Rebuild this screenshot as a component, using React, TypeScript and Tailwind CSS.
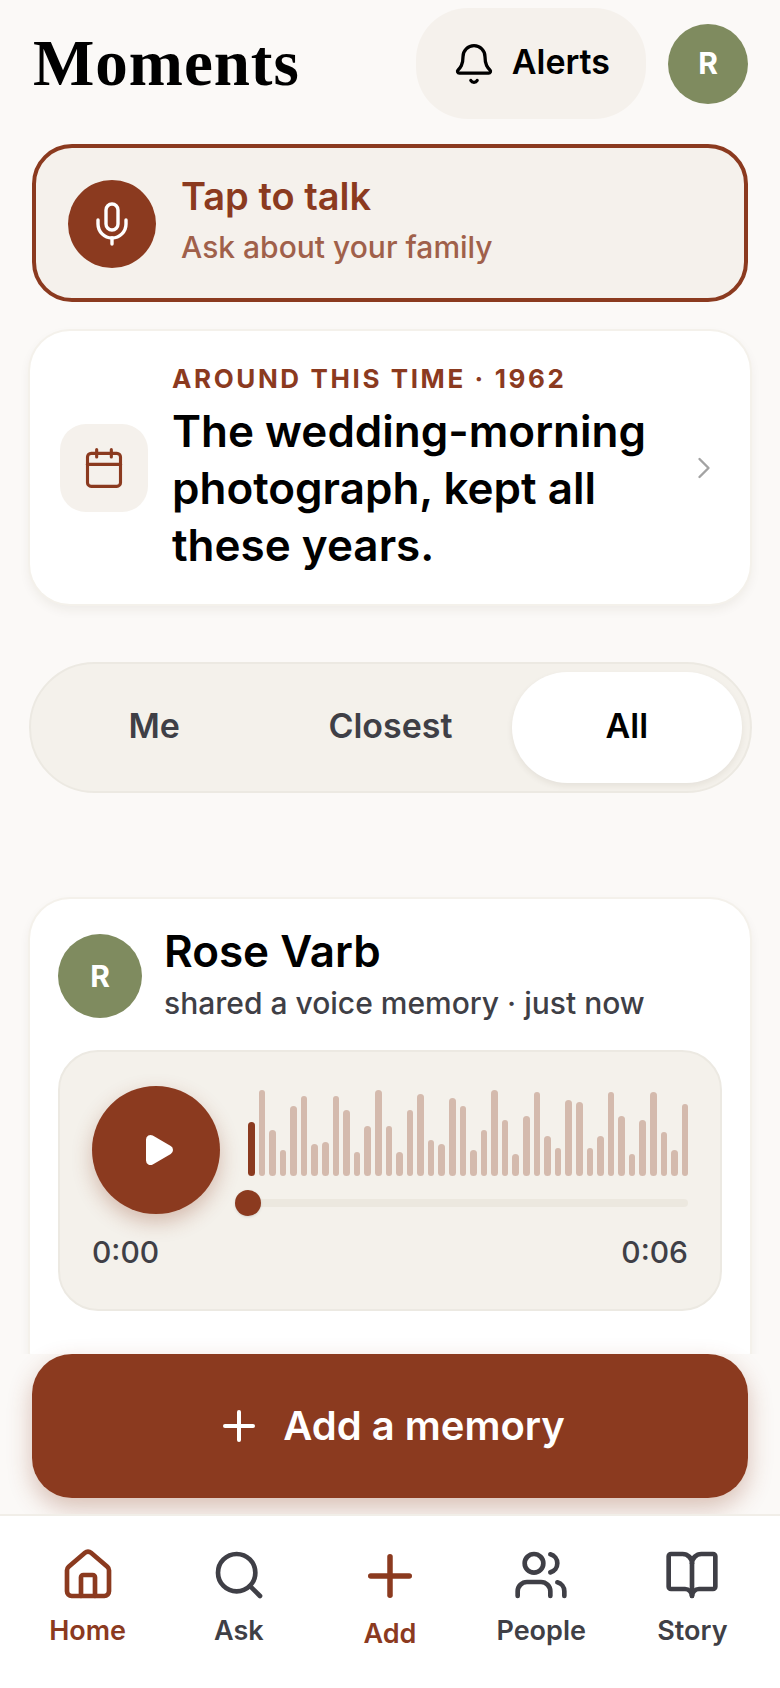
import { Bell, BookOpen, Calendar, ChevronRight, House, Mic, Play, Plus, Search, Users } from "lucide-react"

const bars = [
  54, 86, 46, 26, 70, 80, 32, 34, 80, 66, 24, 50, 86, 50, 24, 66, 82, 36, 32, 78, 70,
  26, 46, 86, 56, 22, 60, 84, 40, 28, 76, 74, 28, 40, 84, 60, 22, 56, 84, 44, 26, 72,
]

const navItems = [
  { label: "Home", icon: House, active: true },
  { label: "Ask", icon: Search, active: false },
  { label: "Add", icon: Plus, active: true, large: true },
  { label: "People", icon: Users, active: false },
  { label: "Story", icon: BookOpen, active: false },
]

export default function App() {
  return (
    <div className="flex h-[1688px] w-[780px] flex-col overflow-hidden bg-[#fbf9f7] font-['Inter',sans-serif] text-black">
      <main className="min-h-0 flex-1 overflow-hidden px-[30px]">
        {/* Header */}
        <header className="flex items-center pt-2 pr-[2px] pl-[3px]">
          <h1 className="flex-1 font-['Liberation_Serif',serif] text-[65px] leading-none font-bold tracking-[0.015em]">
            Moments
          </h1>
          <button className="flex h-[111px] items-center gap-4 rounded-[52px] bg-[#f5f1ec] px-9 text-[34px] font-semibold">
            <Bell size={44} strokeWidth={1.8} />
            <span className="pb-1">Alerts</span>
          </button>
          <div className="ml-[22px] flex h-20 w-20 items-center justify-center rounded-full bg-[#7f8b5f] text-[30px] font-bold text-white">
            R
          </div>
        </header>

        {/* Talk */}
        <button className="mx-[2px] mt-[25px] flex h-[158px] w-[716px] items-center gap-[25px] rounded-[40px] border-4 border-[#8b3a1f] bg-[#f5f1ec] pt-[2px] pl-8 text-left">
          <span className="flex h-[88px] w-[88px] items-center justify-center rounded-full bg-[#8b3a1f] text-white">
            <Mic size={48} strokeWidth={1.7} />
          </span>
          <span className="flex flex-col pb-2">
            <span className="text-[38px] leading-[50px] font-semibold text-[#8b3a1f]">Tap to talk</span>
            <span className="mt-1 text-[30px] leading-[44px] font-medium text-[#a0604a]">Ask about your family</span>
          </span>
        </button>

        {/* Around this time */}
        <section className="mt-[29px] flex h-[273px] items-center rounded-[40px] bg-white pr-[28px] pl-[30px] shadow-[0_0_0_2px_#f4f1eb,0_5px_12px_rgba(70,50,30,0.08)]">
          <div className="flex h-[88px] w-[88px] shrink-0 items-center justify-center rounded-[26px] bg-[#f5f1ec] text-[#8b3a1f]">
            <Calendar size={44} strokeWidth={1.7} />
          </div>
          <div className="ml-6 flex-1">
            <p className="text-[26px] leading-[36px] font-bold tracking-[0.1em] text-[#8b3a1f]">
              AROUND THIS TIME · 1962
            </p>
            <p className="mt-[6px] text-[44px] leading-[57px] font-semibold">
              The wedding-morning
              <br />
              photograph, kept all
              <br />
              these years.
            </p>
          </div>
          <ChevronRight size={36} strokeWidth={1.6} className="text-[#a3a3a3]" />
        </section>

        {/* Filter */}
        <div className="mt-[58px] -ml-[1px] -mr-[2px] grid h-[131px] grid-cols-3 gap-1.5 rounded-full border-2 border-[#ece9e2] bg-[#f4f1eb] p-2 text-[34px] font-semibold text-[#3f3f46]">
          <button className="pb-1">Me</button>
          <button className="pb-1">Closest</button>
          <button className="rounded-full bg-white pb-1 text-black shadow-[0_3px_6px_rgba(70,50,30,0.08)]">All</button>
        </div>

        {/* Memory */}
        <article className="mt-[106px] rounded-[40px] bg-white px-[28px] pt-6 pb-20 shadow-[0_0_0_2px_#f4f1eb,0_5px_12px_rgba(70,50,30,0.08)]">
          <div className="flex items-center gap-[22px]">
            <div className="flex h-[84px] w-[84px] items-center justify-center rounded-full bg-[#7f8b5f] text-[30px] font-bold text-white">
              R
            </div>
            <div className="pb-1">
              <p className="text-[44px] leading-[56px] font-semibold">Rose Varb</p>
              <p className="mt-[2px] text-[30px] leading-[44px] font-medium text-[#3f3f46]">
                shared a voice memory · just now
              </p>
            </div>
          </div>

          <div className="mt-[21px] rounded-[40px] border-2 border-[#ece9e2] bg-[#f4f1eb] px-8 pt-[34px] pb-[37px]">
            <div className="flex gap-7">
              <button className="flex h-32 w-32 shrink-0 items-center justify-center rounded-full bg-[#8b3a1f] text-white shadow-[0_8px_20px_rgba(139,58,31,0.3)]">
                <Play size={36} fill="currentColor" strokeWidth={2} className="ml-1" />
              </button>
              <div className="flex-1 pt-1">
                <div className="flex h-[86px] items-end gap-1">
                  {bars.map((height, index) => (
                    <span
                      key={index}
                      className={index === 0 ? "flex-1 rounded-full bg-[#8b3a1f]" : "flex-1 rounded-full bg-[#8b3a1f]/30"}
                      style={{ height }}
                    />
                  ))}
                </div>
                <div className="relative mt-[14px] flex h-[26px] items-center">
                  <div className="h-2 w-full rounded-full bg-[#ece8df]" />
                  <span className="absolute -left-[13px] h-[26px] w-[26px] rounded-full bg-[#8b3a1f] shadow-sm" />
                </div>
              </div>
            </div>
            <div className="mt-4 flex justify-between text-[30px] leading-[40px] font-medium text-[#3f3f46]">
              <span>0:00</span>
              <span>0:06</span>
            </div>
          </div>
        </article>
      </main>

      {/* Add a memory */}
      <div className="h-40 shrink-0 bg-[#fbf9f7] px-8">
        <button className="flex h-36 w-full items-center justify-center gap-5 rounded-[40px] bg-[#8b3a1f] text-[40px] font-semibold text-white shadow-[0_10px_24px_rgba(139,58,31,0.3)]">
          <Plus size={48} strokeWidth={2} />
          Add a memory
        </button>
      </div>

      {/* Bottom nav */}
      <nav className="relative z-10 grid h-[174px] shrink-0 grid-cols-5 border-t-2 border-[#f1eee8] bg-white px-3 pt-[31px]">
        {navItems.map((item) => {
          const Icon = item.icon
          return (
            <button
              key={item.label}
              className={
                item.active
                  ? "flex flex-col items-center text-[27px] leading-[36px] font-semibold text-[#8b3a1f]"
                  : "flex flex-col items-center text-[27px] leading-[36px] font-semibold text-[#3f3f46]"
              }
            >
              {item.large ? (
                <Icon size={66} strokeWidth={2} className="-mt-[4px] -mb-[4px]" />
              ) : (
                <Icon size={56} strokeWidth={2} />
              )}
              <span className={item.large ? "mt-[11px]" : "mt-[10px]"}>{item.label}</span>
            </button>
          )
        })}
      </nav>
    </div>
  )
}
